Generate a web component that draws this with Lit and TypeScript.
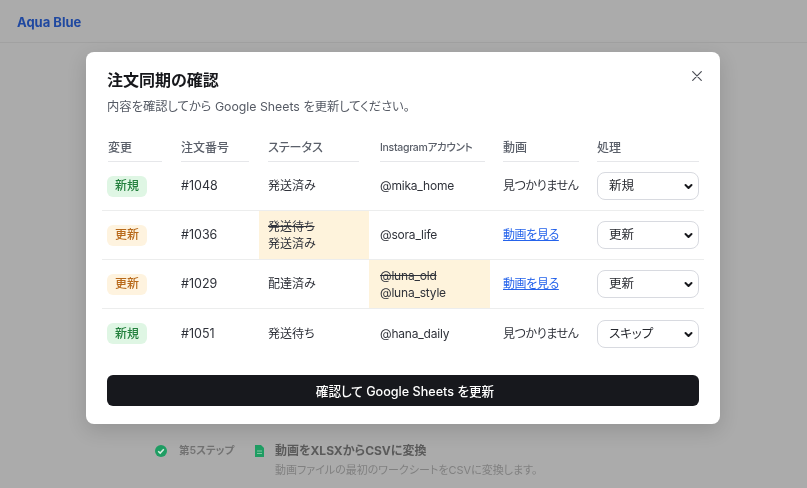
import { LitElement, css, html } from "lit";
import { customElement } from "lit/decorators.js";

type Row = {
	kind: "new" | "update";
	order: string;
	status: string;
	oldStatus?: string;
	account: string;
	oldAccount?: string;
	hasVideo: boolean;
	action: string;
};

const rows: Row[] = [
	{ kind: "new", order: "#1048", status: "発送済み", account: "@mika_home", hasVideo: false, action: "新規" },
	{ kind: "update", order: "#1036", status: "発送済み", oldStatus: "発送待ち", account: "@sora_life", hasVideo: true, action: "更新" },
	{ kind: "update", order: "#1029", status: "配達済み", account: "@luna_style", oldAccount: "@luna_old", hasVideo: true, action: "更新" },
	{ kind: "new", order: "#1051", status: "発送待ち", account: "@hana_daily", hasVideo: false, action: "スキップ" },
];

const actions = ["新規", "更新", "スキップ"];

@customElement("app-root")
export class AppRoot extends LitElement {
	static styles = css`
		:host {
			display: block;
			position: relative;
			width: 807px;
			height: 488px;
			overflow: hidden;
			background: #ababab;
			font-family: Inter, "Noto Sans CJK JP", sans-serif;
			font-feature-settings: "palt";
			color: #24272e;
		}
		.page {
			height: 488px;
			display: flex;
			flex-direction: column;
			filter: blur(0.6px);
		}
		.topbar {
			height: 43px;
			box-sizing: border-box;
			padding: 13px 17px 0;
			border-bottom: 1px solid #a1a1a1;
			font-size: 13px;
			line-height: 18px;
			font-weight: 700;
			color: #1f48a0;
		}
		.step {
			margin-top: 400px;
			padding-left: 155px;
			display: flex;
			align-items: flex-start;
			font-size: 11px;
			line-height: 16px;
			color: #6f6f6f;
		}
		.step-num {
			display: flex;
			align-items: center;
			gap: 12px;
			width: 100px;
			font-size: 10.5px;
			font-weight: 600;
			color: #727272;
		}
		.file {
			width: 20px;
			flex: none;
			padding-top: 2px;
		}
		.step-title {
			font-size: 12px;
			font-weight: 700;
			color: #5a5a5a;
		}
		.step-desc {
			margin-top: 3px;
			color: #808080;
		}
		.overlay {
			position: absolute;
			inset: 0;
			display: flex;
			align-items: flex-start;
			padding: 52px 0 0 86px;
		}
		.modal {
			position: relative;
			width: 634px;
			height: 372px;
			box-sizing: border-box;
			padding: 16px 16px 0;
			background: #fff;
			border-radius: 8px;
			box-shadow: 0 6px 20px rgba(0, 0, 0, 0.14);
			filter: blur(0.25px);
		}
		.close {
			position: absolute;
			top: 19px;
			right: 18px;
			width: 10px;
			height: 10px;
			display: block;
		}
		h2 {
			margin: 0 0 0 5px;
			font-size: 16px;
			line-height: 24px;
			font-weight: 600;
			color: #17181c;
		}
		.sub {
			margin: 6px 0 0 5px;
			font-size: 12.3px;
			line-height: 18px;
			color: #555a64;
		}
		.table {
			margin-top: 17px;
			display: grid;
			grid-template-columns: 70px 87px 110px 121px 107px 107px;
		}
		.th {
			height: 29px;
			box-sizing: border-box;
			padding: 6px 0 0;
			margin-right: 10px;
			margin-left: 9px;
			border-bottom: 1px solid #e6e7ea;
			font-size: 12px;
			line-height: 18px;
			font-weight: 500;
			color: #5b606a;
			white-space: nowrap;
		}
		.th.first {
			margin-left: 6px;
		}
		.th.ig {
			margin-left: 11px;
			margin-right: 5px;
			font-size: 10.5px;
			letter-spacing: -0.3px;
		}
		.th.video {
			margin-left: 13px;
			margin-right: 18px;
		}
		.th.act {
			margin-left: 0;
			margin-right: 5px;
		}
		.td {
			height: 49px;
			box-sizing: border-box;
			display: flex;
			flex-direction: column;
			justify-content: center;
			padding-left: 9px;
			border-bottom: 1px solid #eceded;
			font-size: 12px;
			line-height: 17.5px;
			color: #2f323a;
		}
		.td.last-row {
			border-bottom: none;
		}
		.td.first {
			padding-left: 5px;
			align-items: flex-start;
		}
		.td.order {
			font-size: 12.5px;
		}
		.td.ig {
			padding-left: 11px;
			letter-spacing: -0.2px;
		}
		.td.video {
			padding-left: 13px;
			letter-spacing: -0.4px;
		}
		.td.act {
			padding-left: 0;
			padding-right: 5px;
		}
		.changed {
			background: #fef3dc;
		}
		.old {
			text-decoration: line-through;
		}
		.badge {
			box-sizing: border-box;
			width: 40px;
			height: 21px;
			border-radius: 6px;
			display: flex;
			align-items: center;
			justify-content: center;
			font-size: 12px;
			font-weight: 500;
		}
		.badge.new {
			background: #dff6e4;
			color: #23803d;
		}
		.badge.update {
			background: #fef3df;
			color: #b8691a;
		}
		a {
			color: #2563eb;
			text-decoration: underline;
		}
		.select {
			position: relative;
			display: block;
		}
		select {
			appearance: none;
			display: block;
			width: 102px;
			height: 28px;
			box-sizing: border-box;
			padding: 0 0 0 11px;
			border: 1px solid #d8dae0;
			border-radius: 8px;
			background: #fff;
			font: inherit;
			font-size: 12.5px;
			color: #26282e;
		}
		.chev {
			position: absolute;
			top: 11px;
			right: 6px;
			width: 9px;
			height: 7px;
			pointer-events: none;
		}
		.confirm {
			display: block;
			width: 592px;
			height: 31px;
			margin: 17px 0 0 5px;
			padding: 0 0 0 4px;
			border: none;
			border-radius: 6px;
			background: #17181d;
			color: #fff;
			font: inherit;
			font-size: 12.6px;
			font-weight: 500;
		}
	`;

	private cell(cls: string, last: boolean, content: unknown) {
		return html`<div class="td ${cls} ${last ? "last-row" : ""}">${content}</div>`;
	}

	private renderRow(r: Row, i: number) {
		const last = i === rows.length - 1;
		return html`
			${this.cell(
				"first",
				last,
				html`<span class="badge ${r.kind}">${r.kind === "new" ? "新規" : "更新"}</span>`,
			)}
			${this.cell("order", last, r.order)}
			${this.cell(
				r.oldStatus ? "changed" : "",
				last,
				html`${r.oldStatus ? html`<span class="old">${r.oldStatus}</span>` : ""}<span>${r.status}</span>`,
			)}
			${this.cell(
				`ig ${r.oldAccount ? "changed" : ""}`,
				last,
				html`${r.oldAccount ? html`<span class="old">${r.oldAccount}</span>` : ""}<span>${r.account}</span>`,
			)}
			${this.cell(
				"video",
				last,
				r.hasVideo ? html`<span><a href="#">動画を見る</a></span>` : "見つかりません",
			)}
			${this.cell(
				"act",
				last,
				html`<span class="select">
					<select>
						${actions.map((a) => html`<option ?selected=${a === r.action}>${a}</option>`)}
					</select>
					<svg class="chev" viewBox="0 0 9 7" fill="none" stroke="#17181c" stroke-width="2" stroke-linecap="round" stroke-linejoin="round">
						<path d="M1.5 2 4.5 5 7.5 2" />
					</svg>
				</span>`,
			)}
		`;
	}

	render() {
		return html`
			<div class="page">
				<div class="topbar">Aqua Blue</div>
				<div class="step">
					<div class="step-num">
						<svg width="12" height="12" viewBox="0 0 12 12">
							<circle cx="6" cy="6" r="6" fill="#1f9d63" />
							<path d="M3.2 6.2 5.2 8.1 8.8 4.2" fill="none" stroke="#d7efe2" stroke-width="1.5" />
						</svg>
						<span>第5ステップ</span>
					</div>
					<div class="file">
						<svg width="9" height="12" viewBox="0 0 9 12">
							<path d="M0 0H6L9 3V12H0Z" fill="#1f9d63" />
							<path d="M2 6H7M2 8.5H7" stroke="#9ad0b4" stroke-width="0.8" />
						</svg>
					</div>
					<div>
						<div class="step-title">動画をXLSXからCSVに変換</div>
						<div class="step-desc">動画ファイルの最初のワークシートをCSVに変換します。</div>
					</div>
				</div>
			</div>
			<div class="overlay">
				<div class="modal">
					<svg class="close" viewBox="0 0 10 10" fill="none" stroke="#4a4d55" stroke-width="1.2" stroke-linecap="round">
						<path d="M.7.7 9.3 9.3M9.3.7.7 9.3" />
					</svg>
					<h2>注文同期の確認</h2>
					<p class="sub">内容を確認してから Google Sheets を更新してください。</p>
					<div class="table">
						<div class="th first">変更</div>
						<div class="th">注文番号</div>
						<div class="th">ステータス</div>
						<div class="th ig">Instagramアカウント</div>
						<div class="th video">動画</div>
						<div class="th act">処理</div>
						${rows.map((r, i) => this.renderRow(r, i))}
					</div>
					<button class="confirm">確認して Google Sheets を更新</button>
				</div>
			</div>
		`;
	}
}
